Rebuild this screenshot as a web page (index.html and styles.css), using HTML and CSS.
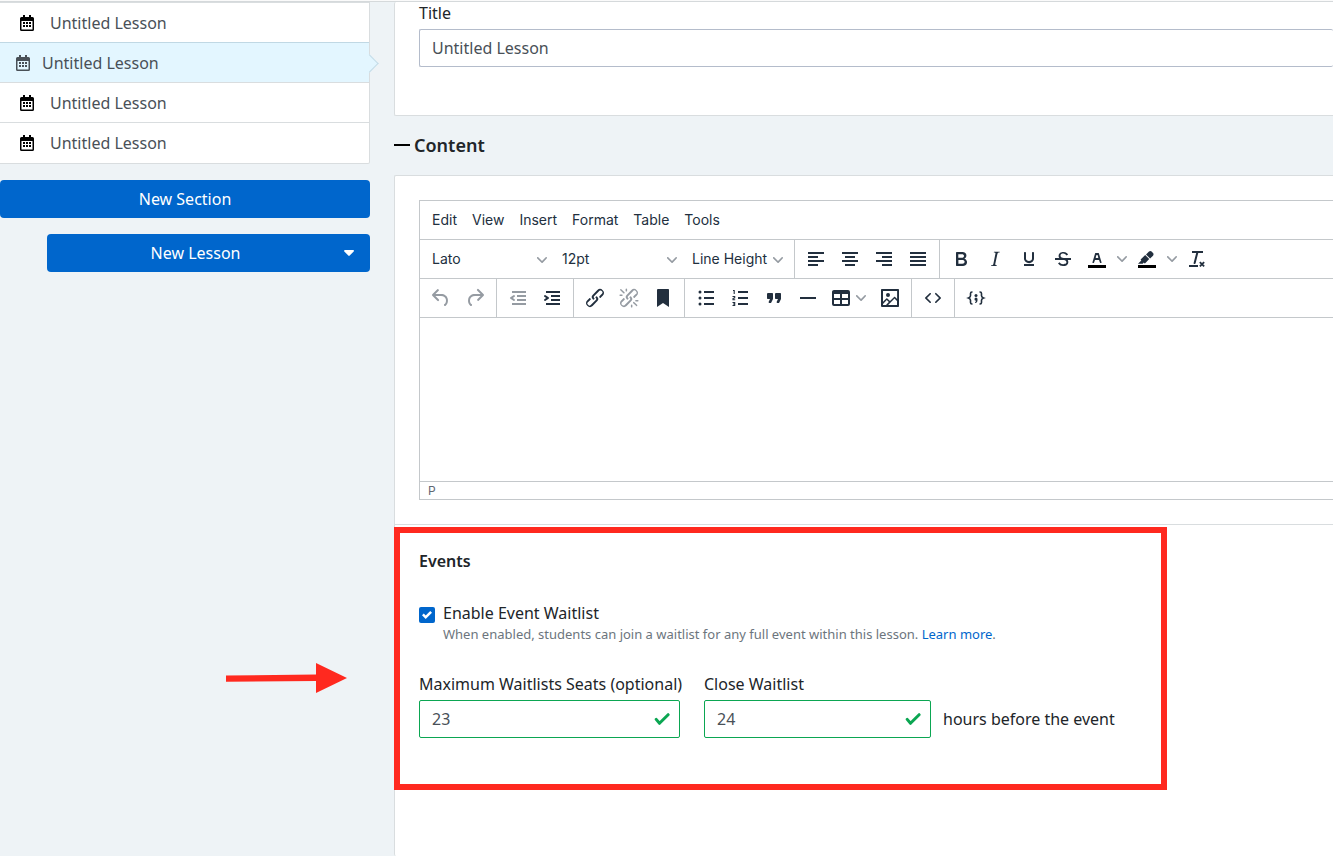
FILE: index.html
```html
<!DOCTYPE html>
<html lang="en">
<head>
<meta charset="utf-8">
<title>Lesson editor</title>
<link rel="stylesheet" href="styles.css">
</head>
<body>
<svg class="sprite" aria-hidden="true">
  <symbol id="calendar" viewBox="0 0 14 16"><path fill-rule="evenodd" d="M3 0h2v2h4V0h2v2h1.500A1.500 1.500 0 0 1 14 3.500v11A1.500 1.500 0 0 1 12.500 16h-11A1.500 1.500 0 0 1 0 14.500v-11A1.500 1.500 0 0 1 1.500 2H3zM1.500 6v8.500h11V6zM3 7h2v2H3zm3 0h2v2H6zm3 0h2v2H9zM3 10h2v2H3zm3 0h2v2H6zm3 0h2v2H9z"/></symbol>
  <symbol id="chevron" viewBox="0 0 10 10"><path d="M8.700 2.200c.3-.3.8-.3 1 0 .4.4.4.9 0 1.200L5.700 7.800c-.3.3-.9.3-1.200 0L.2 3.400a.8.8 0 0 1 0-1.200c.3-.3.8-.3 1.100 0L5 6l3.700-3.800z"/></symbol>
  <symbol id="tick" viewBox="0 0 16 16"><path d="m2.200 8.400 3.300 3.900L14.100 3.700" fill="none" stroke="#0ba652" stroke-width="3" stroke-linecap="round" stroke-linejoin="round"/></symbol>
</svg>
<div class="topline"></div>
<div class="page">
  <aside class="sidebar">
    <ul class="lessons">
      <li><a class="lesson" href="#"><svg class="cal"><use href="#calendar"/></svg>Untitled Lesson</a></li>
      <li><a class="lesson active" href="#"><svg class="cal"><use href="#calendar"/></svg>Untitled Lesson</a></li>
      <li><a class="lesson" href="#"><svg class="cal"><use href="#calendar"/></svg>Untitled Lesson</a></li>
      <li><a class="lesson" href="#"><svg class="cal"><use href="#calendar"/></svg>Untitled Lesson</a></li>
    </ul>
    <button class="btn" type="button">New Section</button>
    <button class="btn btn-lesson" type="button"><span class="btn-text">New Lesson</span><svg class="caret" viewBox="0 0 10 6"><path d="M1 0h8c.9 0 1.200 1 .7 1.500L5.700 5.600c-.4.4-1 .4-1.400 0L.3 1.500C-.2 1 .1 0 1 0z"/></svg></button>
    <svg class="arrow" viewBox="0 0 122 32" aria-hidden="true"><path d="M0 15.500 90 14.500V3l31 15-31 15V21l-90 .800z" transform="translate(0 -2)"/></svg>
  </aside>
  <main class="main">
    <section class="card title-card">
      <label class="label" for="title">Title</label>
      <input class="field title-field" id="title" type="text" value="Untitled Lesson">
    </section>
    <h2 class="heading"><span class="dash"></span>Content</h2>
    <div class="card content-card">
      <section class="content-body">
        <div class="editor">
          <div class="menubar">
            <button type="button">Edit</button><button type="button">View</button><button type="button">Insert</button><button type="button">Format</button><button type="button">Table</button><button type="button">Tools</button>
          </div>
          <div class="toolbar">
            <div class="group">
              <span class="pick"><select aria-label="Font family"><option>Lato</option></select><svg class="chev"><use href="#chevron"/></svg></span>
              <span class="pick"><select aria-label="Font size"><option>12pt</option></select><svg class="chev"><use href="#chevron"/></svg></span>
              <span class="pick pick-line"><select aria-label="Line height"><option>Line Height</option></select><svg class="chev"><use href="#chevron"/></svg></span>
            </div>
            <div class="group">
              <button class="tool" type="button" aria-label="Align left"><svg viewBox="0 0 24 24"><path d="M4 5h16v2H4zm0 4h10v2H4zm0 4h16v2H4zm0 4h10v2H4z"/></svg></button>
              <button class="tool" type="button" aria-label="Align center"><svg viewBox="0 0 24 24"><path d="M4 5h16v2H4zm3 4h10v2H7zm-3 4h16v2H4zm3 4h10v2H7z"/></svg></button>
              <button class="tool" type="button" aria-label="Align right"><svg viewBox="0 0 24 24"><path d="M4 5h16v2H4zm6 4h10v2H10zm-6 4h16v2H4zm6 4h10v2H10z"/></svg></button>
              <button class="tool" type="button" aria-label="Justify"><svg viewBox="0 0 24 24"><path d="M4 5h16v2H4zm0 4h16v2H4zm0 4h16v2H4zm0 4h16v2H4z"/></svg></button>
            </div>
            <div class="group last">
              <button class="tool" type="button" aria-label="Bold"><svg viewBox="0 0 24 24"><path d="M7.800 19c-.3 0-.5 0-.6-.2l-.2-.5V5.700c0-.2 0-.4.2-.5l.6-.2h5c1.500 0 2.700.3 3.500 1 .7.6 1.100 1.400 1.100 2.500a3 3 0 0 1-.6 1.900c-.4.6-1 1-1.600 1.200.4.1.9.3 1.300.6s.8.7 1 1.200c.4.4.5 1 .5 1.600 0 1.300-.4 2.300-1.300 3-.8.7-2.100 1-3.800 1H7.800zm5-8.300c.6 0 1.200-.1 1.600-.5.4-.3.6-.7.6-1.300 0-1.100-.8-1.700-2.300-1.700H9.300v3.500h3.400zm.5 6c.7 0 1.300-.1 1.700-.4.4-.4.6-.9.6-1.500s-.2-1-.7-1.400c-.4-.3-1-.4-2-.4H9.400v3.800h4z"/></svg></button>
              <button class="tool" type="button" aria-label="Italic"><svg viewBox="0 0 24 24"><path d="m16.700 4.700-.1.900h-.3c-.6 0-1 0-1.400.3-.3.3-.4.6-.5 1.100l-2.100 9.800v.6c0 .5.4.8 1.400.8h.2l-.2.8H8l.2-.8h.2c1.100 0 1.800-.5 2-1.500l2-9.800.1-.5c0-.6-.4-.8-1.400-.8h-.3l.2-.9h5.800z"/></svg></button>
              <button class="tool" type="button" aria-label="Underline"><svg viewBox="0 0 24 24"><path d="M16 5c.6 0 1 .4 1 1v5.500a4 4 0 0 1-.4 1.800l-1 1.400a5.300 5.300 0 0 1-5.500 1 5 5 0 0 1-1.600-1c-.5-.4-.8-.9-1.100-1.400a4 4 0 0 1-.4-1.800V6c0-.6.4-1 1-1s1 .4 1 1v5.500c0 .3 0 .6.2 1l.6.7a3.300 3.300 0 0 0 2.200.8 3.400 3.400 0 0 0 2.200-.8c.3-.2.4-.5.6-.8l.2-.9V6c0-.6.4-1 1-1zM7 17h10v2H7z"/></svg></button>
              <button class="tool" type="button" aria-label="Strikethrough"><svg viewBox="0 0 24 24"><path d="M15.600 8.500c-.5-.7-1-1.100-1.300-1.300-.6-.4-1.300-.6-2-.6-2.700 0-2.800 1.700-2.800 2.100 0 1.600 1.800 2 3.200 2.300 4.400.9 4.600 2.800 4.600 3.900 0 1.400-.7 4.100-5 4.100A6.200 6.200 0 0 1 7 16.400l1.500-1.100c.4.6 1.600 2 3.700 2 1.600 0 2.500-.4 3-1.200.4-.8.3-2-.8-2.600-.7-.4-1.600-.7-2.900-1-1-.2-3.900-.8-3.900-3.600C7.600 6 10.300 5 12.400 5c2.900 0 4.200 1.600 4.700 2.400l-1.500 1.100z"/><path d="M4 11h16v2H4z"/></svg></button>
              <span class="split"><button class="tool" type="button" aria-label="Text color"><svg viewBox="0 0 24 24"><path class="swatch" d="M3 18h18v3H3z"/><path d="M8.700 16h-.8a.5.5 0 0 1-.5-.6l2.700-9c.1-.3.3-.4.5-.4h2.800c.2 0 .4.1.5.4l2.700 9a.5.5 0 0 1-.5.6h-.8a.5.5 0 0 1-.4-.4l-.7-2.200c0-.3-.3-.4-.5-.4h-3.400c-.2 0-.4.1-.5.4l-.7 2.200c0 .3-.2.4-.4.4zm2.600-7.600-.6 2a.5.5 0 0 0 .5.6h1.600a.5.5 0 0 0 .5-.6l-.6-2c0-.3-.3-.4-.5-.4h-.4c-.2 0-.4.1-.5.4z"/></svg></button><button class="more" type="button" aria-label="Text color menu"><svg class="chev"><use href="#chevron"/></svg></button></span>
              <span class="split"><button class="tool" type="button" aria-label="Highlight color"><svg viewBox="0 0 24 24"><path class="swatch" d="M3 18h18v3H3z"/><path d="M7.700 16.700H3l3.300-3.300-.7-.8L10.200 8l4 4.100-4 4.200c-.2.2-.6.2-.8 0l-.6-.7-1.100 1.100zM12.800 9.200 11 7.400l3-2.900a2 2 0 0 1 2.600 0L18 6c.7.700.7 2 0 2.700l-2.900 2.900z"/></svg></button><button class="more" type="button" aria-label="Highlight color menu"><svg class="chev"><use href="#chevron"/></svg></button></span>
              <button class="tool" type="button" aria-label="Clear formatting"><svg viewBox="0 0 24 24"><path d="M13.200 6v.200l-2.600 10a1 1 0 0 1-1 .8h-.2a.8.8 0 0 1-.8-1l2.600-10H7V4h11v2zM4 18h9v2H4zm14.500 2L17 18.500 15.500 20l-1.300-1.200 1.600-1.600-1.600-1.500 1.300-1.200L17 16l1.500-1.500 1.300 1.200-1.600 1.500 1.600 1.600z"/></svg></button>
            </div>
          </div>
          <div class="toolbar">
            <div class="group">
              <button class="tool" type="button" aria-label="Undo" disabled><svg viewBox="0 0 24 24"><path d="M6.400 8H12c3.700 0 6.200 2 6.800 5.100.6 2.700-.4 5.600-2.300 6.800a1 1 0 0 1-1-1.800c1.100-.6 1.800-2.700 1.400-4.600-.5-2.100-2.100-3.500-4.900-3.500H6.400l3.300 3.300a1 1 0 1 1-1.400 1.400l-5-5a1 1 0 0 1 0-1.400l5-5a1 1 0 0 1 1.400 1.400L6.400 8z"/></svg></button>
              <button class="tool" type="button" aria-label="Redo" disabled><svg viewBox="0 0 24 24"><path d="M17.600 10H12c-2.800 0-4.400 1.400-4.900 3.500-.4 2 .3 4 1.400 4.600a1 1 0 1 1-1 1.800c-2-1.200-2.900-4.100-2.300-6.800.6-3 3-5.100 6.800-5.100h5.600l-3.300-3.300a1 1 0 1 1 1.400-1.400l5 5a1 1 0 0 1 0 1.400l-5 5a1 1 0 0 1-1.400-1.400l3.300-3.300z"/></svg></button>
            </div>
            <div class="group">
              <button class="tool" type="button" aria-label="Outdent" disabled><svg viewBox="0 0 24 24"><path d="M6 5h14v2H6zm5 4h9v2h-9zm0 4h9v2h-9zm-5 4h14v2H6zm2.600-3.800a1 1 0 0 1-1.200 1.600l-3-2a1 1 0 0 1 0-1.600l3-2a1 1 0 0 1 1.200 1.600L6.800 12z"/></svg></button>
              <button class="tool" type="button" aria-label="Indent"><svg viewBox="0 0 24 24"><path d="M6 5h14v2H6zm5 4h9v2h-9zm0 4h9v2h-9zm-5 4h14v2H6zm-1.600-3.800L6.200 12l-1.800-1.200a1 1 0 0 1 1.200-1.600l3 2a1 1 0 0 1 0 1.600l-3 2a1 1 0 1 1-1.200-1.600z"/></svg></button>
            </div>
            <div class="group">
              <button class="tool" type="button" aria-label="Link"><svg viewBox="0 0 24 24"><path d="M6.200 12.300a1 1 0 0 1 1.400 1.400l-2.100 2a2 2 0 1 0 2.700 2.800l4.800-4.800a1 1 0 0 0 0-1.400 1 1 0 1 1 1.400-1.300 2.900 2.900 0 0 1 0 4L9.600 20a3.900 3.900 0 0 1-5.500-5.500l2-2zm11.600-.6a1 1 0 0 1-1.400-1.400l2-2a2 2 0 1 0-2.600-2.800L11 10.300a1 1 0 0 0 0 1.400A1 1 0 1 1 9.600 13a2.900 2.900 0 0 1 0-4L14.400 4a3.900 3.900 0 0 1 5.500 5.500l-2 2z"/></svg></button>
              <button class="tool" type="button" aria-label="Remove link" disabled><svg viewBox="0 0 24 24"><path d="M6.200 12.300a1 1 0 0 1 1.400 1.400l-2 2a2 2 0 1 0 2.600 2.800l4.800-4.800a1 1 0 0 0 0-1.400 1 1 0 1 1 1.400-1.300 2.900 2.900 0 0 1 0 4L9.600 20a3.900 3.900 0 0 1-5.500-5.500l2-2zm11.600-.6a1 1 0 0 1-1.400-1.400l2.100-2a2 2 0 1 0-2.700-2.800L11 10.300a1 1 0 0 0 0 1.400A1 1 0 1 1 9.600 13a2.900 2.900 0 0 1 0-4L14.400 4a3.900 3.900 0 0 1 5.500 5.500l-2 2zM7.600 6.300a.8.8 0 0 1-1 1.100L3.300 4.200a.7.7 0 1 1 1-1l3.200 3.100zM5.100 8.600a.8.8 0 0 1 0 1.500H3a.8.8 0 0 1 0-1.500h2zm5-3.500a.8.8 0 0 1-1.500 0V3a.8.8 0 0 1 1.500 0v2zm6 11.800a.8.8 0 0 1 1-1l3.200 3.200a.8.8 0 0 1-1 1L16 17zm-2.200 2a.8.8 0 0 1 1.500 0V21a.8.8 0 0 1-1.500 0v-2zm5-3.500a.7.7 0 1 1 0-1.500H21a.8.8 0 0 1 0 1.500h-2z"/></svg></button>
              <button class="tool" type="button" aria-label="Bookmark"><svg viewBox="0 0 24 24"><path d="M6 4v17l6-4 6 4V4c0-.6-.4-1-1-1H7a1 1 0 0 0-1 1z"/></svg></button>
            </div>
            <div class="group">
              <button class="tool" type="button" aria-label="Bullet list"><svg viewBox="0 0 24 24"><path d="M10 5h10v2H10zm0 6h10v2H10zm0 6h10v2H10z"/><circle cx="6" cy="6" r="1.500"/><circle cx="6" cy="12" r="1.500"/><circle cx="6" cy="18" r="1.500"/></svg></button>
              <button class="tool" type="button" aria-label="Numbered list"><svg viewBox="0 0 24 24"><path d="M10 5h10v2H10zm0 6h10v2H10zm0 6h10v2H10z"/><path class="stroke" d="M5 4.500h1.200V8M4.500 10.500h2.200v1.300L5 12.500v1.200h2.200M4.500 16.500h2.200v3H4.500M5 18h1.700"/></svg></button>
              <button class="tool" type="button" aria-label="Blockquote"><svg viewBox="0 0 24 24"><path d="M7.500 17h.9c.4 0 .7-.2.900-.6L11 13V8c0-.6-.4-1-1-1H6a1 1 0 0 0-1 1v4c0 .6.4 1 1 1h2l-1.300 2.700a1 1 0 0 0 .8 1.300zm8 0h.9c.4 0 .7-.2.900-.6L19 13V8c0-.6-.4-1-1-1h-4a1 1 0 0 0-1 1v4c0 .6.4 1 1 1h2l-1.300 2.700a1 1 0 0 0 .8 1.300z"/></svg></button>
              <button class="tool" type="button" aria-label="Horizontal line"><svg viewBox="0 0 24 24"><path d="M4 11h16v2H4z"/></svg></button>
              <button class="tool tool-menu" type="button" aria-label="Table"><svg viewBox="0 0 24 24"><path fill-rule="evenodd" d="M19 4a2 2 0 0 1 2 2v12a2 2 0 0 1-2 2H5a2 2 0 0 1-2-2V6c0-1.100.9-2 2-2h14zM5 14v4h6v-4H5zm14 0h-6v4h6v-4zm0-6h-6v4h6V8zM5 12h6V8H5v4z"/></svg><svg class="chev"><use href="#chevron"/></svg></button>
              <button class="tool" type="button" aria-label="Image"><svg viewBox="0 0 24 24"><path fill-rule="evenodd" d="m5 15.700 3.300-3.200c.3-.3.7-.3 1 0L12 15l4.100-4c.3-.4.8-.4 1 0l2 1.900V5H5v10.700zM5 18v1h3l2.800-2.900-2-2L5 17.900zm14-3-2.500-2.400-6.400 6.500H19v-4zM4 3h16c.6 0 1 .4 1 1v16c0 .6-.4 1-1 1H4a1 1 0 0 1-1-1V4c0-.6.4-1 1-1zm6 8a2 2 0 1 0 0-4 2 2 0 0 0 0 4z"/></svg></button>
            </div>
            <div class="group">
              <button class="tool" type="button" aria-label="Source code"><svg viewBox="0 0 24 24"><path d="M9.800 15.700c.3.3.3.8 0 1-.3.4-.9.4-1.200 0l-4.400-4.100a.8.8 0 0 1 0-1.200l4.400-4.200c.3-.3.9-.3 1.200 0 .3.3.3.8 0 1.100L6 12zM14.200 15.700c-.3.3-.3.8 0 1 .4.4.9.4 1.200 0l4.400-4.100c.3-.3.3-.9 0-1.200l-4.400-4.200a.8.8 0 0 0-1.200 0c-.3.3-.3.8 0 1.100L18 12z"/></svg></button>
            </div>
            <div class="group last">
              <button class="tool" type="button" aria-label="Code sample"><svg viewBox="0 0 24 24"><path class="stroke brace" d="M8.500 6H8c-1 0-1.500.6-1.500 1.500v2.300c0 1-.6 1.700-2 2.200 1.400.5 2 1.200 2 2.200v2.300c0 .9.500 1.500 1.500 1.500h.5M15.500 6h.5c1 0 1.500.6 1.500 1.500v2.300c0 1 .6 1.700 2 2.200-1.400.5-2 1.200-2 2.200v2.300c0 .9-.5 1.500-1.500 1.500h-.5"/><circle cx="12" cy="9.500" r="1.500"/><path d="M10.500 13a1.500 1.500 0 0 1 3 0v1.200c0 1.600-.8 2.600-2.400 2.800v-1c.6-.2 1-.6 1-1.300a1.500 1.500 0 0 1-1.600-1.700z"/></svg></button>
            </div>
          </div>
          <div class="canvas" contenteditable="true" role="textbox" aria-label="Content"></div>
          <div class="status">P</div>
        </div>
      </section>
      <section class="events">
        <div class="highlight" aria-hidden="true"></div>
        <h3 class="subheading">Events</h3>
        <div class="check-row">
          <span class="check"><input type="checkbox" id="enable" checked><svg class="check-tick" viewBox="0 0 8 8"><path d="M6.564.750 2.974 4.350 1.435 2.797 0 4.231l2.974 2.965L8 2.193z"/></svg></span>
          <div>
            <label class="label" for="enable">Enable Event Waitlist</label>
            <p class="help">When enabled, students can join a waitlist for any full event within this lesson. <a href="#">Learn more</a>.</p>
          </div>
        </div>
        <div class="fields">
          <div class="seats">
            <label class="label" for="seats">Maximum Waitlists Seats (optional)</label>
            <span class="valid"><input class="field" id="seats" type="text" value="23"><svg class="ok"><use href="#tick"/></svg></span>
          </div>
          <div class="close">
            <label class="label" for="close">Close Waitlist</label>
            <div class="inline">
              <span class="valid valid-close"><input class="field" id="close" type="text" value="24"><svg class="ok"><use href="#tick"/></svg></span>
              <span>hours before the event</span>
            </div>
          </div>
        </div>
      </section>
    </div>
  </main>
</div>
</body>
</html>
```
FILE: styles.css
```css
* { box-sizing: border-box; }
body {
  margin: 0;
  min-height: 100vh;
  display: flex;
  flex-direction: column;
  overflow-x: hidden;
  background: #eef3f6;
  color: #212529;
  font: 16px/24px "Noto Sans", sans-serif;
}
button, input, select { font: inherit; color: inherit; }
.sprite { display: none; }
.topline { height: 2px; background: #fafafa; border-bottom: 1px solid #d5d9db; }
.page { flex: 1; display: flex; gap: 24px; }

.sidebar { width: 370px; flex: none; position: relative; }
.lessons {
  margin: 0 0 16px;
  padding: 0;
  list-style: none;
  background: #fff;
  border: 1px solid #d9dddf;
  border-left: 0;
  border-radius: 0 0 2px 0;
}
.lesson {
  position: relative;
  display: flex;
  align-items: center;
  gap: 16px;
  height: 40px;
  padding-left: 20px;
  border-bottom: 1px solid #d9dddf;
  color: #495057;
  text-decoration: none;
}
.lessons li:last-child .lesson { border-bottom: 0; }
.cal { width: 14px; height: 16px; fill: #000; }
.lesson.active { gap: 12px; padding-left: 16px; background: #e3f6ff; box-shadow: 0 -1px #c0d8e4; }
.active .cal { fill: #495057; }
.lesson.active::after {
  content: "";
  position: absolute;
  right: -7px;
  top: 14px;
  width: 12px;
  height: 12px;
  background: #e3f6ff;
  border: solid #c5dbe6;
  border-width: 1px 1px 0 0;
  transform: rotate(45deg);
}
.btn {
  display: flex;
  align-items: center;
  justify-content: center;
  width: 100%;
  height: 38px;
  margin-bottom: 16px;
  padding: 0 16px;
  border: 0;
  border-radius: 4px;
  background: #0066cc;
  color: #fff;
}
.btn-lesson { width: auto; margin-left: 47px; min-width: 323px; padding-left: 0; }
.btn-text { flex: 1; }
.caret { width: 10px; height: 6px; fill: #fff; }
.arrow { position: absolute; left: 226px; top: 660px; width: 122px; height: 32px; fill: #ff291f; }

.main { flex: 1; min-width: 0; display: flex; flex-direction: column; }
.card { background: #fff; border: 1px solid #d9dddf; border-right: 0; border-radius: 2px 0 0 2px; }
.label { display: block; color: #212529; }
.field {
  display: block;
  width: 100%;
  height: 38px;
  padding: 0 12px;
  border: 1px solid #b4bccb;
  border-radius: 2px;
  background: #fff;
  color: #495057;
}
.title-card { padding: 0 0 48px 24px; border-top: 0; }
.title-card .label { margin-bottom: 5px; line-height: 22px; }
.title-field { border-right: 0; }
.heading {
  display: flex;
  align-items: center;
  gap: 4px;
  height: 59px;
  margin: 0;
  padding-bottom: 1px;
  font-size: 18px;
  font-weight: 600;
}
.dash { width: 16px; height: 2px; background: #000; }
.content-card { flex: 1; border-bottom: 0; }
.content-body { padding: 24px 0 24px 24px; border-bottom: 1px solid #d9dddf; }

.editor { border: 1px solid #c4c8cb; border-right: 0; color: #222f3e; font: 14px/18px Inter, sans-serif; }
.menubar { display: flex; gap: 7px; padding: 0 8px; height: 38px; align-items: center; }
.menubar button { padding: 0 4px; border: 0; background: none; }
.toolbar { display: flex; height: 39px; border-top: 1px solid #c4c8cb; }
.group { display: flex; align-items: center; padding: 0 4px; border-right: 1px solid #c4c8cb; }
.group.last { border-right: 0; }
.pick { position: relative; width: 130px; }
.pick-line { width: 106px; }
.pick select { width: 100%; padding: 0 8px; border: 0; background: none; appearance: none; }
.chev { display: block; width: 10px; height: 10px; fill: #959ba2; }
.pick .chev { position: absolute; right: 7px; top: 5px; pointer-events: none; }
.tool, .more { display: flex; align-items: center; justify-content: center; width: 34px; height: 34px; padding: 0; border: 0; background: none; }
.tool svg { width: 24px; height: 24px; fill: #222f3e; }
.tool:disabled svg { fill: #959ba2; }
.tool .swatch { fill: #000; }
.tool .stroke { fill: none; stroke: #222f3e; stroke-width: 1.1; }
.tool .brace { stroke-width: 1.6; }
.split { display: flex; }
.more { width: 16px; }
.tool-menu { width: 48px; gap: 3px; padding-right: 3px; }
.tool-menu .chev { width: 10px; height: 10px; fill: #959ba2; }
.canvas { height: 164px; border-top: 1px solid #c4c8cb; outline: 0; }
.status { height: 18px; padding: 0 8px; border-top: 1px solid #c4c8cb; color: #5f6873; font-size: 12px; line-height: 17px; }

.events { position: relative; padding: 24px; }
.highlight { position: absolute; left: -1px; top: 2px; width: 773px; height: 263px; border: 6px solid #ff291f; pointer-events: none; }
.subheading { margin: 0 0 28px; font-size: 16px; font-weight: 600; }
.check-row { display: flex; gap: 8px; margin-bottom: 29px; }
.check { position: relative; width: 16px; height: 16px; margin-top: 6px; }
.check input { display: block; width: 16px; height: 16px; margin: 0; border-radius: 2px; background: #0066cc; appearance: none; }
.check-tick { position: absolute; left: 3px; top: 3px; width: 10px; height: 10px; fill: #fff; pointer-events: none; }
.help { margin: 0; color: #6c757d; font-size: 13px; line-height: 18px; }
.help a { color: #0066cc; text-decoration: none; }
.fields { display: flex; gap: 24px; }
.fields .label { margin-bottom: 4px; white-space: nowrap; }
.seats { width: 261px; }
.valid { position: relative; display: block; }
.valid-close { width: 227px; }
.valid .field { border-color: #0ba652; }
.ok { position: absolute; right: 10px; top: 11px; width: 16px; height: 16px; pointer-events: none; }
.inline { display: flex; align-items: center; gap: 12px; }
```
